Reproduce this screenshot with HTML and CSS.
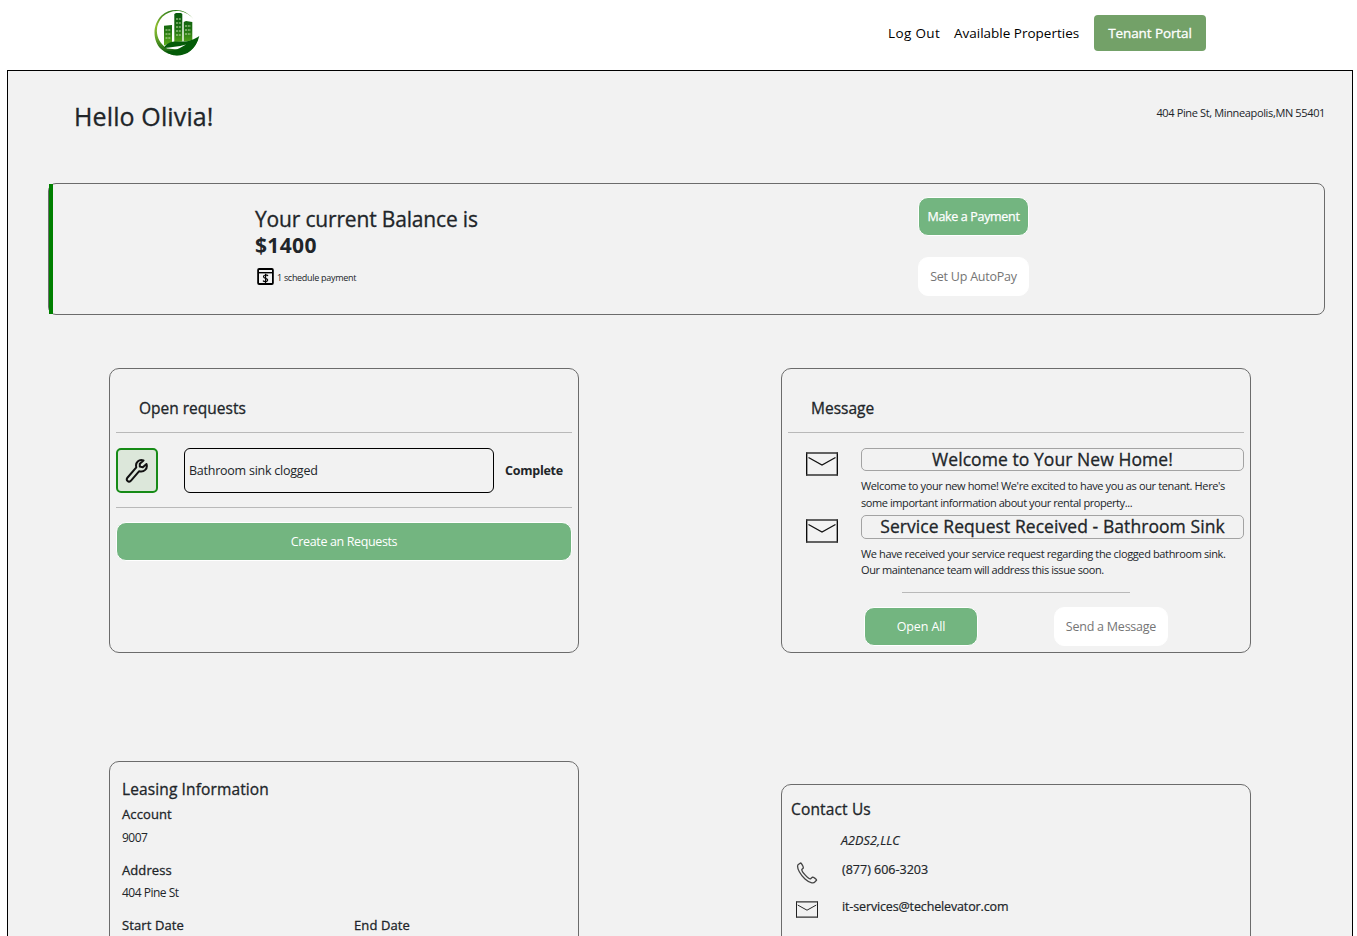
FILE: index.html
```html
<!DOCTYPE html>
<html lang="en">
<head>
<meta charset="utf-8">
<title>Tenant Portal</title>
<link rel="stylesheet" href="styles.css">
</head>
<body>
<svg class="defs" width="0" height="0" aria-hidden="true">
  <symbol id="mail" viewBox="0 0 32 24"><path d="M.7 .5V23.500M31.300 .5V23.500" stroke="#000" stroke-width="1.300"/><path d="M0 1H32M0 23H32" stroke="#333" stroke-width="1.700"/><path d="M2.500 5.500 16 13 29.500 5.500" fill="none" stroke="#111" stroke-width="1.300"/></symbol>
</svg>
<header class="header">
  <svg class="logo" viewBox="0 0 48 50">
    <defs>
      <linearGradient id="ring" x1="0" y1="0" x2="0" y2="1"><stop offset="0" stop-color="#2f7d1c"/><stop offset=".35" stop-color="#8fbd30"/><stop offset=".6" stop-color="#6aa82a"/><stop offset="1" stop-color="#04540a"/></linearGradient>
      <linearGradient id="tower" x1="0" y1="0" x2="0" y2="1"><stop offset="0" stop-color="#07590c"/><stop offset=".5" stop-color="#1c6f10"/><stop offset="1" stop-color="#5fae1c"/></linearGradient>
    </defs>
    <path d="M40.500 11C33 .8 18.500-1.500 8.500 7.500-1 17-.5 32.500 8 41 20 52 40 48 45 31L30 42 14 40.500C2.500 33 .500 18.500 9.500 8.800 18.500 .8 31.500 1 40.500 11Z" fill="url(#ring)"/>
    <path d="M11 17.800 19 17V34.500L11 37.500ZM21.300 6 23 5H28L29.300 6V33.500L21.300 34ZM30.700 14 33 13 39.300 14V32.500L30.700 33.500Z" fill="url(#tower)"/>
    <path d="M11 40C13 34.500 19 33 27 33.500 35 34 41 31.500 46.300 28 43 41.500 34 47.500 24 47.500 19 47.500 15.500 45.500 13 43 20 43.500 27 40.500 33 36.500 25 39 18 39 11 40Z" fill="#045b08"/>
    <path d="M12.500 22H18M12.500 26H18M12.500 30H18M23 11H28M23 15H28M23 19H28M23 23H28M23 27H28M32 18H38M32 22H38M32 26H38" stroke="#c5dfae" stroke-width="1" stroke-dasharray="2 .8"/>
  </svg>
  <nav class="nav">
    <a class="nav-link logout">Log Out</a>
    <a class="nav-link props">Available Properties</a>
    <a class="portal"><span>Tenant Portal</span></a>
  </nav>
</header>
<main class="page">
  <div class="greeting">
    <h1>Hello Olivia!</h1>
    <p>404 Pine St, Minneapolis,MN 55401</p>
  </div>
  <section class="balance">
    <div class="accent"></div>
    <div class="balance-info">
      <h2>Your current Balance is</h2>
      <strong class="amount">$1400</strong>
      <div class="scheduled">
        <svg width="17" height="17" viewBox="0 0 17 17"><rect x="1.100" y="1" width="14.800" height="15" rx="1" fill="none" stroke="#000" stroke-width="1.800"/><path d="M1 4.700H16" stroke="#000" stroke-width="1.400"/><path d="M11 8C10 6.500 6.500 6.600 6.500 8.600 6.500 11 10.700 9.600 10.700 12 10.700 14 7 14 6 12.600M8.600 5.800V15" fill="none" stroke="#000" stroke-width="1.200"/></svg>
        <span>1 schedule payment</span>
      </div>
    </div>
    <div class="balance-actions">
      <button class="btn green"><span class="t-pay">Make a Payment</span></button>
      <button class="btn white"><span class="t-auto">Set Up AutoPay</span></button>
    </div>
  </section>
  <div class="columns">
    <section class="card requests">
      <h3>Open requests</h3>
      <hr>
      <div class="request">
        <div class="tool"><svg width="24" height="26" viewBox="0 0 24 26"><path d="M18.500 2.500C14 1 10 4.500 11.300 9.300L2.200 20C.8 22.300 3.500 25 5.800 22.800L14.200 13.200C19 14.500 23 10.700 21.500 6L17.800 9.300 14.800 8.600 14.800 5.800Z" fill="none" stroke="#111" stroke-width="2" stroke-linejoin="round"/></svg></div>
        <div class="request-name"><span>Bathroom sink clogged</span></div>
        <strong><span>Complete</span></strong>
      </div>
      <hr>
      <button class="btn green create"><span class="t-create">Create an Requests</span></button>
    </section>
    <section class="card messages">
      <h3>Message</h3>
      <hr>
      <div class="message">
        <svg class="envelope" width="32" height="24"><use href="#mail"/></svg>
        <div class="message-body">
          <h4>Welcome to Your New Home!</h4>
          <p><span>Welcome to your new home! We're excited to have you as our tenant. Here's</span><br><span class="tight">some important information about your rental property...</span></p>
        </div>
      </div>
      <div class="message second">
        <svg class="envelope" width="32" height="24"><use href="#mail"/></svg>
        <div class="message-body">
          <h4>Service Request Received - Bathroom Sink</h4>
          <p><span>We have received your service request regarding the clogged bathroom sink.</span><br><span class="tight">Our maintenance team will address this issue soon.</span></p>
        </div>
      </div>
      <hr class="short">
      <div class="message-actions">
        <button class="btn green open"><span class="t-open">Open All</span></button>
        <button class="btn white send"><span class="t-send">Send a Message</span></button>
      </div>
    </section>
  </div>
  <div class="columns lower">
    <section class="card lease">
      <h3>Leasing Information</h3>
      <h5>Account</h5>
      <p>9007</p>
      <h5>Address</h5>
      <p>404 Pine St</p>
      <div class="dates"><h5>Start Date</h5><h5>End Date</h5></div>
    </section>
    <section class="card contact">
      <h3>Contact Us</h3>
      <address>A2DS2,LLC</address>
      <div class="contact-row phone">
        <svg width="22" height="22" viewBox="0 0 22 22"><path d="M4.500 1 2 2.800C.2 6 5 13.500 9 17 13.500 21 17.500 21.600 19 19.800L20.500 18.300C21 17.500 17.500 15 16.300 15.200L14.600 16.800C12.500 17.500 5.500 9.500 5.800 7.500L7.300 6C7.600 5 5.500 1 4.500 1Z" fill="none" stroke="#444" stroke-width="1.300" stroke-linejoin="round"/></svg>
        <span class="t-phone">(877) 606-3203</span>
      </div>
      <div class="contact-row email">
        <svg width="22" height="17"><use href="#mail" width="22" height="17"/></svg>
        <span class="t-email">it-services@techelevator.com</span>
      </div>
    </section>
  </div>
</main>
</body>
</html>
```
FILE: styles.css
```css
* { box-sizing: border-box; }
html { overflow: hidden; background: #fff; }
body { margin: 0; height: 936px; overflow: hidden; font-family: "Open Sans", "Noto Sans", sans-serif; color: #212529; font-size: 12px; }
h1, h2, h3, h4, h5, p { margin: 0; font-weight: 500; white-space: nowrap; }
h1, h2, h3, h4, h5 { -webkit-text-stroke: .3px currentColor; }
button { font-family: inherit; padding: 0; }
span { white-space: nowrap; }
svg { flex: none; }
.defs { display: none; }
.header { height: 70px; display: flex; justify-content: space-between; padding: 0 151px 0 153px; }
.logo { width: 48px; height: 50px; margin-top: 8px; }
.nav { display: flex; height: 66px; align-items: center; }
.nav-link { color: #000; font-size: 13.500px; white-space: nowrap; }
.logout { width: 66px; letter-spacing: .36px; }
.props { width: 140px; letter-spacing: 0; }
.portal { width: 112px; height: 36px; border-radius: 4px; background: #73a168; color: #fff; display: flex; align-items: center; justify-content: center; font-size: 13.500px; letter-spacing: -.1px; -webkit-text-stroke: .3px #fff; }
.page { margin-left: 7px; width: 1346px; height: 866px; overflow: hidden; border: 1px solid #000; border-bottom: 0; background: #f2f2f2; }
.greeting { height: 112px; padding: 27px 27px 0 66px; display: flex; justify-content: space-between; }
.greeting h1 { font-size: 25px; line-height: 37px; letter-spacing: .12px; }
.greeting p { font-size: 11px; line-height: 30px; font-weight: 400; letter-spacing: -.36px; }
.balance { width: 1277px; height: 132px; margin-left: 40px; border: 1px solid #6c6c6c; border-radius: 8px; display: flex; }
.accent { width: 4px; height: 130px; background: green; flex: none; }
.balance-info { width: 664px; margin-left: 202px; padding-top: 22px; }
.balance h2 { font-size: 21px; line-height: 26px; letter-spacing: -.17px; }
.amount { display: block; font-size: 21px; line-height: 26px; letter-spacing: .35px; }
.scheduled { display: flex; align-items: center; gap: 3px; margin: 10px 0 0 2px; font-size: 9px; height: 17px; letter-spacing: -.3px; }
.scheduled span { padding-top: 1px; }
.balance-actions { width: 111px; padding-top: 13px; margin-left: -1px; display: flex; flex-direction: column; gap: 21px; }
.btn { height: 39px; border: 1px solid #fff; border-radius: 10px; font-size: 12.500px; display: flex; align-items: center; justify-content: center; }
.green { background: #73b580; color: #fff; }
.white { background: #fff; color: #757575; }
.t-pay { letter-spacing: -.33px; -webkit-text-stroke: .25px #fff; }
.t-auto, .t-send { letter-spacing: -.23px; }
.t-create { letter-spacing: -.37px; }
.t-open { letter-spacing: -.12px; }
.columns { display: flex; align-items: flex-start; gap: 202px; margin: 53px 0 0 101px; }
.card { width: 470px; height: 285px; border: 1px solid #6c6c6c; border-radius: 10px; padding: 6px; }
.card h3 { font-size: 15.500px; line-height: 24px; }
.requests h3, .messages h3 { margin: 21px 0 0 23px; }
hr { margin: 12px 0 15px; border: 0; height: 1px; background: #b9b9b9; }
.request { display: flex; align-items: center; height: 45px; }
.tool { width: 42px; height: 45px; border: 2px solid #168b16; border-radius: 5px; background: #dce7da; display: flex; align-items: center; justify-content: center; }
.request-name { width: 310px; height: 45px; margin-left: 26px; padding-left: 4px; border: 1px solid #000; border-radius: 6px; display: flex; align-items: center; font-size: 12.500px; letter-spacing: -.24px; }
.request strong { margin-left: 11px; font-size: 12.500px; letter-spacing: -.25px; }
.request + hr { margin-top: 14px; margin-bottom: 14px; }
.create { width: 100%; }
.message { display: flex; height: 67px; }
.envelope { margin: 4px 23px 0 18px; }
.message-body { width: 383px; }
.message h4 { height: 23px; border: 1px solid #a3a3a3; border-radius: 5px; font-size: 17.500px; line-height: 21px; text-align: center; letter-spacing: .07px; }
.message p { font-size: 11px; line-height: 16.500px; padding-top: 7px; font-weight: 400; letter-spacing: -.37px; }
.message .tight { letter-spacing: -.42px; }
.second { height: 77px; }
.second h4 { height: 24px; }
.second p { line-height: 16px; }
.short { width: 228px; margin: 0 0 14px 114px; }
.message-actions { display: flex; padding-left: 76px; gap: 76px; }
.open { width: 114px; }
.send { width: 114px; }
.lower { margin-top: 108px; }
.lease { padding: 15px 12px; height: 320px; }
.lease h3 { letter-spacing: .12px; }
.lease h5 { font-size: 13px; letter-spacing: .1px; line-height: 20px; margin-top: 3px; }
.lease p { font-size: 12px; line-height: 20px; font-weight: 400; margin: 4px 0 0; letter-spacing: -.5px; }
.lease p + h5 { margin-top: 12px; }
.lease h5 + p ~ p { margin-top: 3px; }
.dates { display: grid; grid-template-columns: 232px 1fr; margin-top: 9px; }
.contact { margin-top: 23px; height: 300px; padding: 12px 9px; }
.contact h3 { letter-spacing: .15px; }
.t-phone, .t-email, address { font-size: 12.500px; line-height: 20px; white-space: nowrap; -webkit-text-stroke: .2px currentColor; }
address { margin: 10px 0 0 50px; letter-spacing: .1px; }
.contact-row { display: flex; }
.contact-row svg { margin-left: 5px; }
.phone { height: 37px; padding-top: 9px; }
.phone svg { margin-top: 2px; }
.phone span { margin-left: 24px; }
.email { padding-top: 9px; }
.email svg { margin-top: 4px; }
.email span { margin-left: 24px; letter-spacing: -.14px; }
```
